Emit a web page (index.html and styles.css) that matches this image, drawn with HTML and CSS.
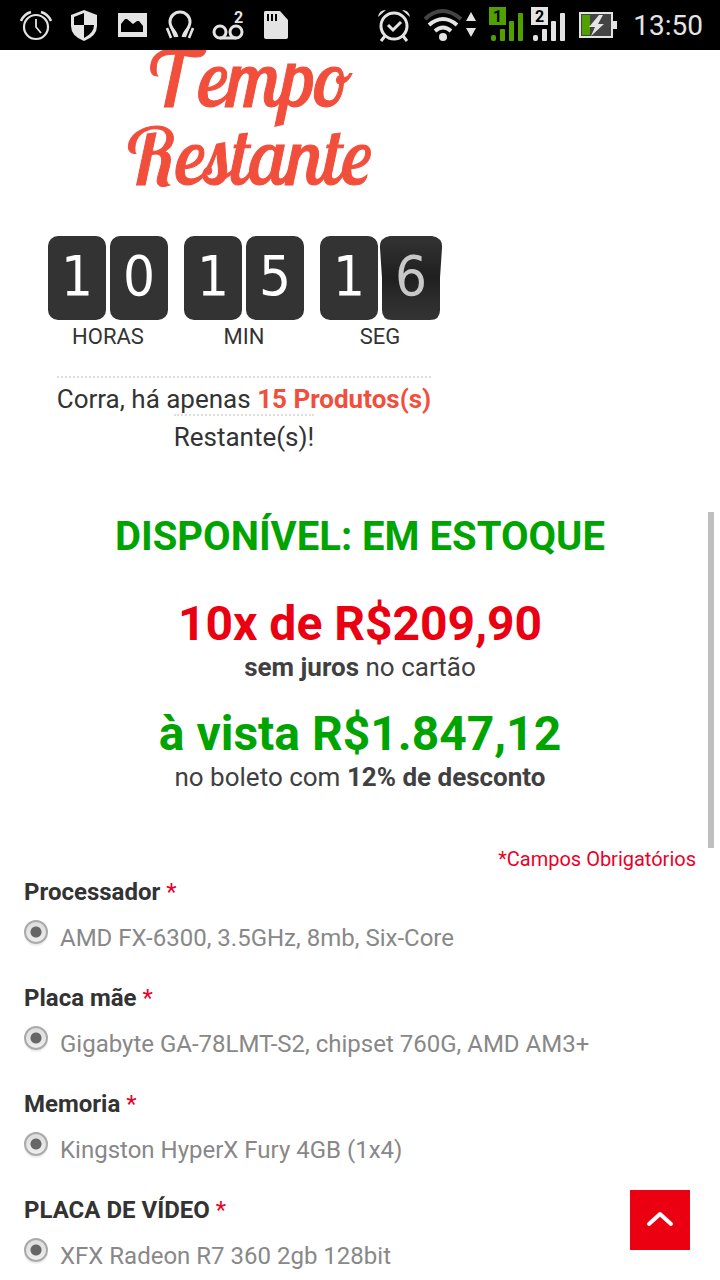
FILE: index.html
```
<!DOCTYPE html>
<html lang="pt-br">
<head>
    <meta charset="UTF-8">
    <meta name="viewport" content="width=device-width, initial-scale=1.0">
    <title>Produto</title>
    <link rel="stylesheet" href="styles.css">
</head>
<body>
    <!-- Barra de status -->
    <header class="status-bar">
        <div class="status-left">
            <svg width="32" height="32" viewBox="0 0 32 32" fill="none" stroke="#e4e4e4" stroke-width="2.2">
                <circle cx="16" cy="18" r="12"/>
                <path d="M16 10v8l5 6" stroke-width="1.8"/>
                <path d="M1 12Q4 5 11 3M21 3Q28 5 31 12" stroke-width="2.6"/>
            </svg>
            <svg width="32" height="32" viewBox="0 0 32 32">
                <path fill="#e4e4e4" d="M16 1L29 6v11q0 10-13 15Q3 27 3 17V6z"/>
                <path fill="#000" d="M16 4v12H6V8zM16 16h10q0 8-10 13z"/>
            </svg>
            <svg width="32" height="32" viewBox="0 0 32 32">
                <path fill="#e4e4e4" d="M2 4h29v24H2z"/>
                <path fill="#000" d="M5 23v-8l4-5h2l6 5 4-3h2l4 5v6z"/>
            </svg>
            <svg width="32" height="32" viewBox="0 0 32 32" fill="none" stroke="#e4e4e4" stroke-width="3">
                <path d="M13 28C12 22 6 20 6 13a10 10 0 0 1 20 0c0 7-6 9-7 15"/>
                <path d="M7 18l4 10M25 18l-4 10" stroke-width="2"/>
                <path d="M3 19l4 10M29 19l-4 10" stroke-width="2.6"/>
            </svg>
            <svg width="32" height="32" viewBox="0 0 32 32" fill="none" stroke="#e4e4e4" stroke-width="3">
                <circle cx="8" cy="23" r="6"/>
                <circle cx="24" cy="23" r="6"/>
                <path d="M8 29h16"/>
                <text class="icon-text" x="22" y="14" fill="#e4e4e4" stroke="none">2</text>
            </svg>
            <svg width="32" height="32" viewBox="0 0 32 32">
                <path fill="#e4e4e4" d="M5 2h15l8 9v17q0 2-2 2H6q-2 0-2-2V4q0-2 1-2z"/>
                <path stroke="#000" stroke-width="2" d="M8 5v7M12 5v7M16 5v7"/>
            </svg>
        </div>
        <div class="status-right">
            <svg width="34" height="34" viewBox="0 0 34 34" fill="none" stroke="#e4e4e4" stroke-width="3">
                <circle cx="17" cy="18" r="13"/>
                <path d="M11 17l5 5 8-8M8 28l-4 5M26 28l4 5"/>
                <path fill="#e4e4e4" stroke="none" d="M1 9q1-7 8-7zM33 9q-1-7-8-7z"/>
            </svg>
            <svg width="54" height="36" viewBox="0 0 54 36" fill="none" stroke="#e4e4e4" stroke-width="4">
                <path stroke="#444" d="M2 12q17-16 36 0"/>
                <path d="M6 18q14-12 28 0M12 24q8-7 16 0"/>
                <circle cx="20" cy="30" r="4" fill="#e4e4e4" stroke="none"/>
                <path fill="#e4e4e4" stroke="none" d="M43 14l5-9 5 9zM43 21h10l-5 9z"/>
            </svg>
            <svg width="36" height="36" viewBox="0 0 36 36" fill="#52a000">
                <path d="M0 0h17v18H0z"/>
                <rect x="2" y="28" width="5" height="6" rx="2"/>
                <rect x="11" y="22" width="5" height="12" rx="1"/>
                <rect x="20" y="14" width="5" height="20" rx="1"/>
                <rect x="29" y="6" width="5" height="28" rx="1"/>
                <text class="icon-text" x="4" y="15" fill="#000">1</text>
            </svg>
            <svg class="signal-white" width="36" height="36" viewBox="0 0 36 36" fill="#e4e4e4">
                <path d="M0 0h17v18H0z"/>
                <rect x="2" y="28" width="5" height="6" rx="2"/>
                <rect x="11" y="22" width="5" height="12" rx="1"/>
                <rect x="20" y="14" width="5" height="20" rx="1"/>
                <rect x="29" y="6" width="5" height="28" rx="1"/>
                <text class="icon-text" x="4" y="15" fill="#000">2</text>
            </svg>
            <svg width="38" height="28" viewBox="0 0 38 28">
                <path fill="#444" stroke="#e4e4e4" stroke-width="2" d="M1 2h32v24H1z"/>
                <path fill="#52a000" d="M3 4h8v20H3z"/>
                <path fill="#e4e4e4" d="M34 10h4v8h-4zM20 4L10 16h6l-4 9 13-12h-6l5-9z"/>
            </svg>
            <span class="clock">13:50</span>
        </div>
    </header>

    <main class="product">
        <section class="timer">
            <h1>Tempo<br>Restante</h1>
            <div class="countdown">
                <div class="unit">
                    <div class="digits">
                        <span class="digit">1</span>
                        <span class="digit">0</span>
                    </div>
                    <p>HORAS</p>
                </div>
                <div class="unit">
                    <div class="digits">
                        <span class="digit">1</span>
                        <span class="digit">5</span>
                    </div>
                    <p>MIN</p>
                </div>
                <div class="unit">
                    <div class="digits">
                        <span class="digit">1</span>
                        <span class="digit flipping">
                            <svg class="flap" width="64" height="84" viewBox="0 0 64 84">
                                <defs>
                                    <linearGradient id="flapShade" x1="0" y1="0" x2="0" y2="1">
                                        <stop offset="0" stop-color="#333"/>
                                        <stop offset="0.5" stop-color="#1f1f1f"/>
                                        <stop offset="0.75" stop-color="#2c2c2c"/>
                                        <stop offset="1" stop-color="#333"/>
                                    </linearGradient>
                                </defs>
                                <path fill="url(#flapShade)" d="M11 0H53Q64 2 63 12L61 42V74Q61 84 51 84H13Q3 84 3 74V42L1 12Q0 2 11 0z"/>
                            </svg>
                            <span class="flap-number">6</span>
                        </span>
                    </div>
                    <p>SEG</p>
                </div>
            </div>
            <p class="remaining"><span>Corra, há apenas <strong>15 Produtos(s)</strong><br>Restante(s)!</span></p>
        </section>

        <section class="prices">
            <h2>DISPONÍVEL: EM ESTOQUE</h2>
            <p class="price installments">10x de R$209,90</p>
            <p class="note"><strong>sem juros</strong> no cartão</p>
            <p class="price cash">à vista R$1.847,12</p>
            <p class="note">no boleto com <strong>12% de desconto</strong></p>
        </section>

        <form class="options">
            <p class="required">*Campos Obrigatórios</p>
            <fieldset>
                <legend>Processador <em>*</em></legend>
                <div class="option">
                    <input type="radio" id="processador" name="processador" checked>
                    <label for="processador">AMD FX-6300, 3.5GHz, 8mb, Six-Core</label>
                </div>
            </fieldset>
            <fieldset>
                <legend>Placa mãe <em>*</em></legend>
                <div class="option">
                    <input type="radio" id="placa-mae" name="placa-mae" checked>
                    <label for="placa-mae">Gigabyte GA-78LMT-S2, chipset 760G, AMD AM3+</label>
                </div>
            </fieldset>
            <fieldset>
                <legend>Memoria <em>*</em></legend>
                <div class="option">
                    <input type="radio" id="memoria" name="memoria" checked>
                    <label for="memoria">Kingston HyperX Fury 4GB (1x4)</label>
                </div>
            </fieldset>
            <fieldset>
                <legend>PLACA DE VÍDEO <em>*</em></legend>
                <div class="option">
                    <input type="radio" id="placa-video" name="placa-video" checked>
                    <label for="placa-video">XFX Radeon R7 360 2gb 128bit</label>
                </div>
            </fieldset>
        </form>
    </main>

    <div class="scroll-thumb"></div>
    <button type="button" class="back-to-top" aria-label="Voltar ao topo">
        <svg width="30" height="20" viewBox="0 0 30 20" fill="none" stroke="#fff" stroke-width="4" stroke-linecap="round" stroke-linejoin="round">
            <path d="M4 14L15 4l11 10"/>
        </svg>
    </button>
</body>
</html>
```
FILE: styles.css
```
* {
    margin: 0;
    padding: 0;
    box-sizing: border-box;
}

body {
    height: 100vh;
    display: flex;
    flex-direction: column;
    overflow: hidden;
    background: #fff;
    color: #333;
    font-family: Roboto, sans-serif;
}

/* Barra de status */
.status-bar {
    flex: none;
    display: flex;
    justify-content: space-between;
    align-items: center;
    height: 50px;
    padding: 0 17px 0 20px;
    background: #000;
}

.status-left,
.status-right {
    display: flex;
    align-items: center;
}

.status-left {
    gap: 16px;
}

.status-right {
    gap: 12px;
}

.signal-white {
    margin-left: -6px;
}

.icon-text {
    font-family: Roboto, sans-serif;
    font-size: 16px;
    font-weight: bold;
}

.clock {
    margin-left: 4px;
    color: #e4e4e4;
    font-size: 28px;
    line-height: 50px;
    padding-top: 2px;
}

/* Contador */
.product {
    flex: 1;
    min-height: 0;
    overflow: hidden;
    padding: 0 24px;
}

.timer {
    max-width: 440px;
    text-align: center;
}

.timer h1 {
    margin-top: -11px;
    margin-bottom: 41px;
    padding-left: 8px;
    color: #f24e3c;
    font-family: "Lobster Two", Lobster, "Liberation Serif", serif;
    font-size: 78px;
    font-style: italic;
    font-weight: normal;
    font-kerning: none;
    line-height: 78px;
    -webkit-text-stroke: 1px #f24e3c;
}

.countdown {
    display: flex;
    justify-content: center;
    gap: 16px;
}

.digits {
    display: flex;
    gap: 4px;
}

.digit {
    position: relative;
    width: 58px;
    height: 84px;
    border-radius: 10px;
    background: #333;
    color: #fff;
    font-family: "DejaVu Sans Condensed", "DejaVu Sans", sans-serif;
    font-size: 56px;
    line-height: 80px;
}

.flipping {
    background: none;
    color: #c8c8c8;
}

.flap {
    position: absolute;
    top: 0;
    left: -3px;
}

.flap-number {
    position: relative;
}

.unit p {
    font-size: 22px;
    line-height: 34px;
}

.remaining {
    margin-top: 26px;
    font-size: 26px;
    line-height: 38px;
}

.remaining span {
    padding-top: 6px;
    border-top: 2px dotted #ddd;
    -webkit-box-decoration-break: clone;
    box-decoration-break: clone;
}

.remaining strong {
    color: #f24e3c;
}

/* Preços */
.prices {
    margin-top: 56px;
    text-align: center;
}

.prices h2 {
    margin-bottom: 34px;
    color: #00a400;
    font-size: 40px;
    line-height: 50px;
}

.price {
    font-size: 48px;
    font-weight: bold;
    line-height: 56px;
}

.installments {
    color: #eb0012;
}

.cash {
    margin-top: 24px;
    color: #00a400;
}

.note {
    color: #404040;
    font-size: 26px;
    line-height: 30px;
}

/* Opções */
.required {
    margin-top: 52px;
    margin-bottom: 2px;
    color: #eb0027;
    font-size: 20px;
    line-height: 30px;
    text-align: right;
}

fieldset {
    margin-bottom: 26px;
    border: none;
}

legend {
    margin-bottom: 12px;
    font-size: 24px;
    font-weight: bold;
    line-height: 32px;
}

legend em {
    color: #eb0027;
    font-style: normal;
    font-weight: normal;
}

.option {
    display: flex;
    align-items: flex-start;
    gap: 12px;
    color: #888;
    font-size: 24px;
    line-height: 36px;
}

.option input {
    appearance: none;
    flex: none;
    width: 24px;
    height: 24px;
    border: 2px solid #aaa;
    border-radius: 50%;
    background: radial-gradient(circle, #666 5px, transparent 6px), linear-gradient(#ddd, #eee);
    box-shadow: 0 2px 1px #eee;
}

.scroll-thumb {
    position: fixed;
    top: 40%;
    right: 6px;
    width: 6px;
    height: 336px;
    background: #bfbfbf;
}

.back-to-top {
    position: fixed;
    right: 30px;
    bottom: 30px;
    display: flex;
    justify-content: center;
    align-items: center;
    width: 60px;
    height: 60px;
    border: none;
    background: #eb0012;
    cursor: pointer;
}
```
